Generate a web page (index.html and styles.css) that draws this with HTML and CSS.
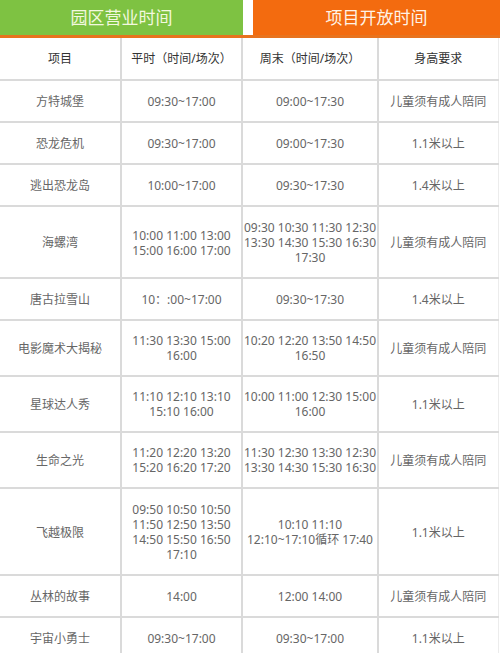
FILE: index.html
```html
<!DOCTYPE html>
<html lang="zh-CN">
<head>
<meta charset="utf-8">
<link rel="stylesheet" href="styles.css">
</head>
<body>
<div class="page">
  <div class="tabs">
    <div class="tab tab-green">园区营业时间</div>
    <div class="tab-gap"></div>
    <div class="tab tab-orange">项目开放时间</div>
  </div>
  <table class="grid">
    <colgroup>
      <col class="c1"><col class="c2"><col class="c3"><col class="c4">
    </colgroup>
    <thead>
      <tr><th>项目</th><th>平时（时间/场次）</th><th>周末（时间/场次）</th><th>身高要求</th></tr>
    </thead>
    <tbody>
      <tr><td>方特城堡</td><td>09:30~17:00</td><td>09:00~17:30</td><td>儿童须有成人陪同</td></tr>
      <tr><td>恐龙危机</td><td>09:30~17:00</td><td>09:00~17:30</td><td>1.1米以上</td></tr>
      <tr><td>逃出恐龙岛</td><td>10:00~17:00</td><td>09:30~17:30</td><td>1.4米以上</td></tr>
      <tr><td>海螺湾</td><td>10:00 11:00 13:00<br>15:00 16:00 17:00</td><td>09:30 10:30 11:30 12:30<br>13:30 14:30 15:30 16:30<br>17:30</td><td>儿童须有成人陪同</td></tr>
      <tr><td>唐古拉雪山</td><td>10：:00~17:00</td><td>09:30~17:30</td><td>1.4米以上</td></tr>
      <tr class="r2"><td>电影魔术大揭秘</td><td>11:30 13:30 15:00<br>16:00</td><td>10:20 12:20 13:50 14:50<br>16:50</td><td>儿童须有成人陪同</td></tr>
      <tr class="r2"><td>星球达人秀</td><td>11:10 12:10 13:10<br>15:10 16:00</td><td>10:00 11:00 12:30 15:00<br>16:00</td><td>1.1米以上</td></tr>
      <tr class="r2"><td>生命之光</td><td>11:20 12:20 13:20<br>15:20 16:20 17:20</td><td>11:30 12:30 13:30 12:30<br>13:30 14:30 15:30 16:30</td><td>儿童须有成人陪同</td></tr>
      <tr><td>飞越极限</td><td>09:50 10:50 10:50<br>11:50 12:50 13:50<br>14:50 15:50 16:50<br>17:10</td><td>10:10 11:10<br>12:10~17:10循环 17:40</td><td>1.1米以上</td></tr>
      <tr><td>丛林的故事</td><td>14:00</td><td>12:00 14:00</td><td>儿童须有成人陪同</td></tr>
      <tr><td>宇宙小勇士</td><td>09:30~17:00</td><td>09:30~17:00</td><td>1.1米以上</td></tr>
    </tbody>
  </table>
</div>
</body>
</html>
```

FILE: styles.css
```css
html, body {
  margin: 0;
  padding: 0;
  background: #ffffff;
}

body {
  font-family: "Noto Sans", "Noto Sans CJK SC", sans-serif;
  color: #666666;
  overflow: hidden;
}

.page {
  width: 500px;
}

.tabs {
  display: flex;
  height: 35px;
  border-bottom: 3px solid #e8731e;
}

.tab {
  display: flex;
  align-items: center;
  justify-content: center;
  font-size: 17px;
  line-height: 20px;
  color: #ffffff;
  font-family: "Noto Sans CJK SC", sans-serif;
}

.tab-green {
  width: 243px;
  background: #7ec242;
  color: #f2f8df;
  padding-bottom: 2px;
}

.tab-gap {
  width: 10px;
  background: #ffffff;
}

.tab-orange {
  flex: 1;
  background: #f36b0f;
  color: #fff3e6;
  padding-bottom: 2px;
}

.grid {
  width: 498px;
  border-collapse: collapse;
  table-layout: fixed;
  font-size: 12px;
  line-height: 15px;
}

.c1 { width: 121px; }
.c2 { width: 121px; }
.c3 { width: 136px; }
.c4 { width: 120px; }

.grid th,
.grid td {
  border: 2px solid #dadada;
  padding: 13px 0 12px;
  text-align: center;
  vertical-align: middle;
  font-weight: normal;
  white-space: nowrap;
}

.grid .r2 td {
  padding-top: 12px;
  padding-bottom: 12px;
}

.grid tr:first-child th {
  border-top: none;
}

.grid th:first-child,
.grid td:first-child {
  border-left: none;
}

.grid th:last-child,
.grid td:last-child {
  border-right: 1px solid #ececec;
}

.grid th {
  color: #333333;
  font-size: 12px;
  padding-top: 13px;
  padding-bottom: 13px;
}
```
